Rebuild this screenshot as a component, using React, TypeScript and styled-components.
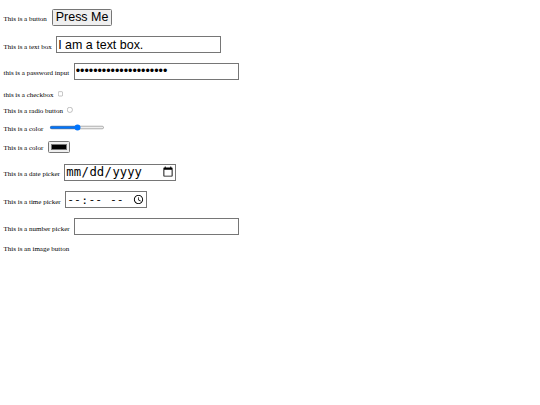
import React from "react";
import styled, { createGlobalStyle } from "styled-components";

const Global = createGlobalStyle`
  html, body { margin: 0; padding: 0; background: #ffffff; }
  body { font-family: "Liberation Serif", "Times New Roman", serif; color: #000; }
`;

const Page = styled.main`
  zoom: 0.4375;
  padding: 8px;
  display: flex;
  flex-direction: column;
  font-size: 16px;
`;

const Row = styled.div<{ $top: number }>`
  display: flex;
  align-items: baseline;
  gap: 10.5px;
  margin-top: ${(p) => p.$top}px;
`;

const Label = styled.span`
  white-space: nowrap;
`;

const BigButton = styled.button`
  font-size: 28.5px;
  margin-left: 1.5px;
`;

const TextField = styled.input`
  font-size: 28.5px;
`;

const SmallControl = styled.input`
  margin: 3px 3px 3px -1px;
`;

const DateField = styled.input<{ $size: number }>`
  font-size: ${(p) => p.$size}px;
`;

export default function App() {
  return (
    <>
      <Global />
      <Page>
        <Row $top={12}>
          <Label>This is a button</Label>
          <BigButton>Press Me</BigButton>
        </Row>
        <Row $top={24.5}>
          <Label>This is a text box</Label>
          <TextField type="text" defaultValue="I am a text box." />
        </Row>
        <Row $top={22}>
          <Label>this is a password input</Label>
          <TextField type="password" defaultValue="abcdefghijklmnopqrstu" />
        </Row>
        <Row $top={23}>
          <Label>this is a checkbox</Label>
          <SmallControl type="checkbox" />
        </Row>
        <Row $top={16}>
          <Label>This is a radio button</Label>
          <SmallControl type="radio" />
        </Row>
        <Row $top={20}>
          <Label>This is a color</Label>
          <input type="range" defaultValue={50} />
        </Row>
        <Row $top={18}>
          <Label>This is a color</Label>
          <input type="color" defaultValue="#000000" />
        </Row>
        <Row $top={25}>
          <Label>This is a date picker</Label>
          <DateField $size={28} type="date" />
        </Row>
        <Row $top={24}>
          <Label>This is a time picker</Label>
          <DateField $size={26} type="time" />
        </Row>
        <Row $top={23}>
          <Label>This is a number picker</Label>
          <TextField type="number" />
        </Row>
        <Row $top={22.5}>
          <Label>This is an image button</Label>
        </Row>
      </Page>
    </>
  );
}
